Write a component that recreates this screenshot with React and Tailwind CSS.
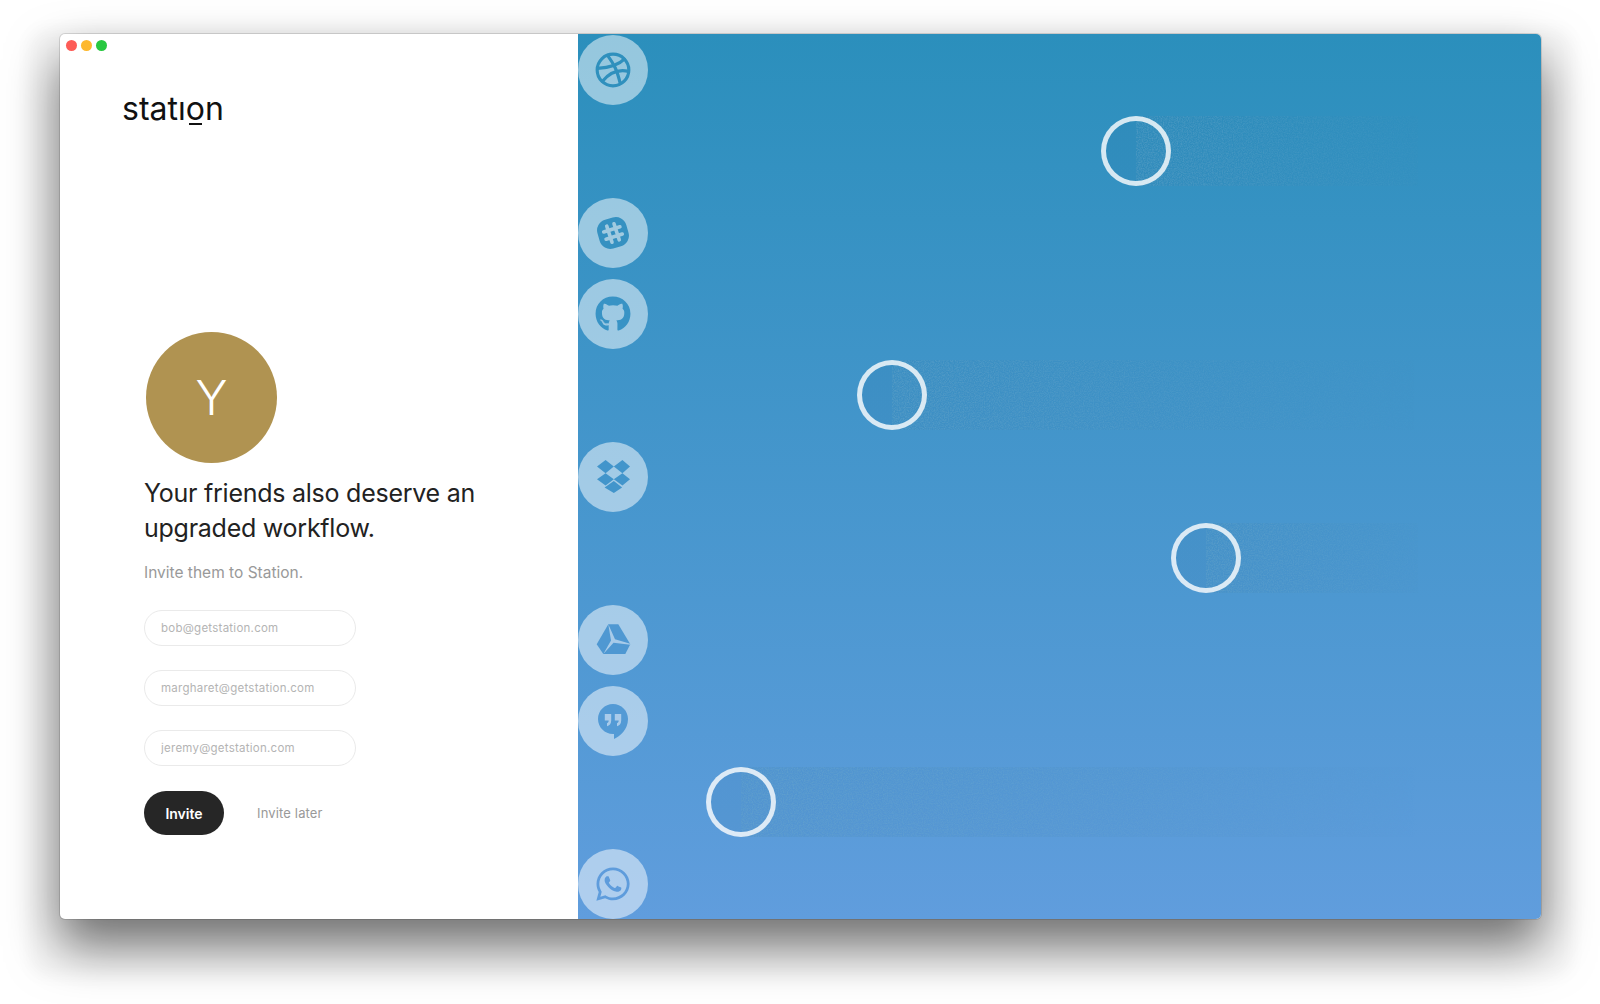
import React from "react";
import { FaWhatsapp, FaGithub } from "react-icons/fa";
import { Dribbble } from "lucide-react";

function SlackIcon({ c }) {
  return (
    <svg width="36" height="36" viewBox="0 0 36 36" aria-hidden="true">
      <rect x="3" y="3" width="30" height="30" rx="11" fill="currentColor" transform="rotate(-16 18 18)" />
      <g stroke={c} strokeWidth="3.600" strokeLinecap="round" transform="rotate(-18 18 18)">
        <path d="M14.200 9.500v17M21.800 9.500v17M9.500 14.200h17M9.500 21.800h17" />
      </g>
    </svg>
  );
}

function HangoutsIcon({ c }) {
  return (
    <svg width="30" height="35" viewBox="0 0 30 35" aria-hidden="true">
      <path d="M15 0C6.700 0 0 6.700 0 15s6.700 15 15 15h1v5c6-2.500 14-9.500 14-20C30 6.700 23.300 0 15 0Z" fill="currentColor" />
      <path d="M6.800 10h6.400v6.500c0 3.300-1.800 5.200-4.200 5.700v-3c1.100-.5 1.600-1.100 1.700-2.600H6.800ZM16.800 10h6.400v6.500c0 3.300-1.800 5.200-4.200 5.700v-3c1.100-.5 1.600-1.100 1.700-2.600h-3.900Z" fill={c} />
    </svg>
  );
}

function DriveIcon({ c }) {
  return (
    <svg width="35" height="31" viewBox="5 9 35 31" aria-hidden="true">
      <path d="M17.300 9.300h10l12 20-5 9.700h-22l-6.600-9.700Z" fill="currentColor" />
      <path d="M17.300 9.300 24 24.300l15.300 4.500v1L22.500 27.800 12.300 39l7.700-13.500Z" fill={c} />
    </svg>
  );
}

function DropboxIcon() {
  return (
    <svg width="33" height="33" viewBox="18 30 100 100" aria-hidden="true">
      <path d="M18 50 44 30l25 20-25 20ZM69 50l26-20 23 20-23 20ZM18 88l26-18 25 18-25 19ZM69 88l26-18 23 18-23 19ZM69 94l25 19-25 17-28-17Z" fill="currentColor" />
    </svg>
  );
}

function Trail({ id, width, end }) {
  return (
    <svg width={width} height="70" className="block shrink-0 -ml-[35px]" aria-hidden="true">
      <defs>
        <filter id={`n${id}`} x="0" y="0" width="100%" height="100%">
          <feTurbulence type="fractalNoise" baseFrequency="0.8" numOctaves="2" seed={id + 3} />
          <feColorMatrix values="0 0 0 0 0.14  0 0 0 0 0.38  0 0 0 0 0.58  0 0 0 2.200 -0.750" />
        </filter>
        <linearGradient id={`g${id}`}>
          <stop offset="0" stopColor="#fff" stopOpacity="0.8" />
          <stop offset="0.55" stopColor="#fff" stopOpacity="0.4" />
          <stop offset="1" stopColor="#fff" stopOpacity={end} />
        </linearGradient>
        <mask id={`m${id}`}>
          <rect width="100%" height="100%" fill={`url(#g${id})`} />
        </mask>
      </defs>
      <g mask={`url(#m${id})`}>
        <rect width="100%" height="100%" fill="#28689e" opacity="0.16" />
        <rect width="100%" height="100%" filter={`url(#n${id})`} opacity="0.6" />
      </g>
    </svg>
  );
}

function IconRow({ children, className }) {
  return (
    <div className="h-[70px] flex">
      <div className={`w-[70px] h-[70px] rounded-full bg-white/50 flex items-center justify-center ${className}`}>
        {children}
      </div>
    </div>
  );
}

function RingRow({ id, pad, width, end }) {
  return (
    <div className={`h-[70px] flex items-center ${pad}`}>
      <div className="relative z-10 w-[70px] h-[70px] shrink-0 rounded-full border-[5px] border-white/80 bg-[linear-gradient(90deg,rgba(40,104,158,0.1)_50%,transparent_50%)]" />
      <Trail id={id} width={width} end={end} />
    </div>
  );
}

function Field({ placeholder }) {
  return (
    <input
      readOnly
      placeholder={placeholder}
      className="block w-[212px] h-[36px] rounded-full border border-[#eaeaea] bg-white pl-[16px] text-[11.500px] tracking-[0.25px] outline-none placeholder:text-[#b4b4b4]"
    />
  );
}

export default function App() {
  return (
    <div className="w-[1600px] h-[1004px] bg-white pt-[34px] pl-[60px] overflow-hidden font-['Inter',sans-serif]">
      <div className="w-[1481px] h-[885px] flex rounded-[5px] overflow-hidden bg-white shadow-[0_26px_50px_2px_rgba(0,0,0,0.55),0_26px_16px_32px_rgba(0,0,0,0.03),0_0_0_1px_rgba(0,0,0,0.12)]">
        <div className="w-[518px] shrink-0 flex flex-col">
          <div className="flex gap-[4px] pt-[6px] pl-[5.500px]">
            <span className="w-[11px] h-[11px] rounded-full bg-[#fd5c57]" />
            <span className="w-[11px] h-[11px] rounded-full bg-[#fdb82e]" />
            <span className="w-[11px] h-[11px] rounded-full bg-[#28c840]" />
          </div>
          <div className="relative ml-[62px] mt-[38px] w-fit h-[40px] text-[32px] leading-[40px] tracking-[0px] font-normal text-[#111]">
            statıon
            <span className="absolute left-[67px] top-[34px] w-[13px] h-[2px] bg-[#111]" />
          </div>
          <div className="ml-[84px] mt-[203px] flex flex-col items-start">
            <div className="ml-[2px] w-[131px] h-[131px] rounded-full bg-[#b09351] flex items-center justify-center text-white text-[48px] font-light">
              Y
            </div>
            <h1 className="mt-[13px] w-[360px] text-[25px] leading-[35px] font-normal tracking-[-0.25px] text-[#222]">
              Your friends also deserve an upgraded workflow.
            </h1>
            <p className="mt-[15px] text-[15.500px] leading-[24px] text-[#999]">Invite them to Station.</p>
            <div className="mt-[25px] flex flex-col gap-[24px]">
              <Field placeholder="bob@getstation.com" />
              <Field placeholder="margharet@getstation.com" />
              <Field placeholder="jeremy@getstation.com" />
            </div>
            <div className="mt-[25px] flex items-center gap-[33px]">
              <button className="w-[80px] h-[44px] rounded-full bg-[#262626] text-white text-[14px] font-semibold">Invite</button>
              <span className="pt-[2px] text-[13px] tracking-[0.15px] text-[#999]">Invite later</span>
            </div>
          </div>
        </div>
        <div className="flex-1 pt-px flex flex-col justify-between bg-[linear-gradient(180deg,#2b8fbc_0%,#609ddd_100%)]">
          <IconRow className="text-[#2f90bd]"><Dribbble size={38} strokeWidth={2} /></IconRow>
          <RingRow id={1} pad="pl-[523px]" width={282} end={0.12} />
          <IconRow className="text-[#3591c1]"><SlackIcon c="#a0cae0" /></IconRow>
          <IconRow className="text-[#3893c5]"><FaGithub size={36} /></IconRow>
          <RingRow id={2} pad="pl-[279px] -translate-y-px" width={522} end={0.05} />
          <IconRow className="text-[#4295cb]"><DropboxIcon /></IconRow>
          <RingRow id={3} pad="pl-[593px]" width={212} end={0.12} />
          <IconRow className="text-[#4f98d2]"><DriveIcon c="#a7cbe9" /></IconRow>
          <IconRow className="text-[#539ad5]"><HangoutsIcon c="#a9cbea" /></IconRow>
          <RingRow id={4} pad="pl-[128px] -translate-y-px" width={677} end={0} />
          <IconRow className="text-[#5e9cdc]"><FaWhatsapp size={38} /></IconRow>
        </div>
      </div>
    </div>
  );
}
